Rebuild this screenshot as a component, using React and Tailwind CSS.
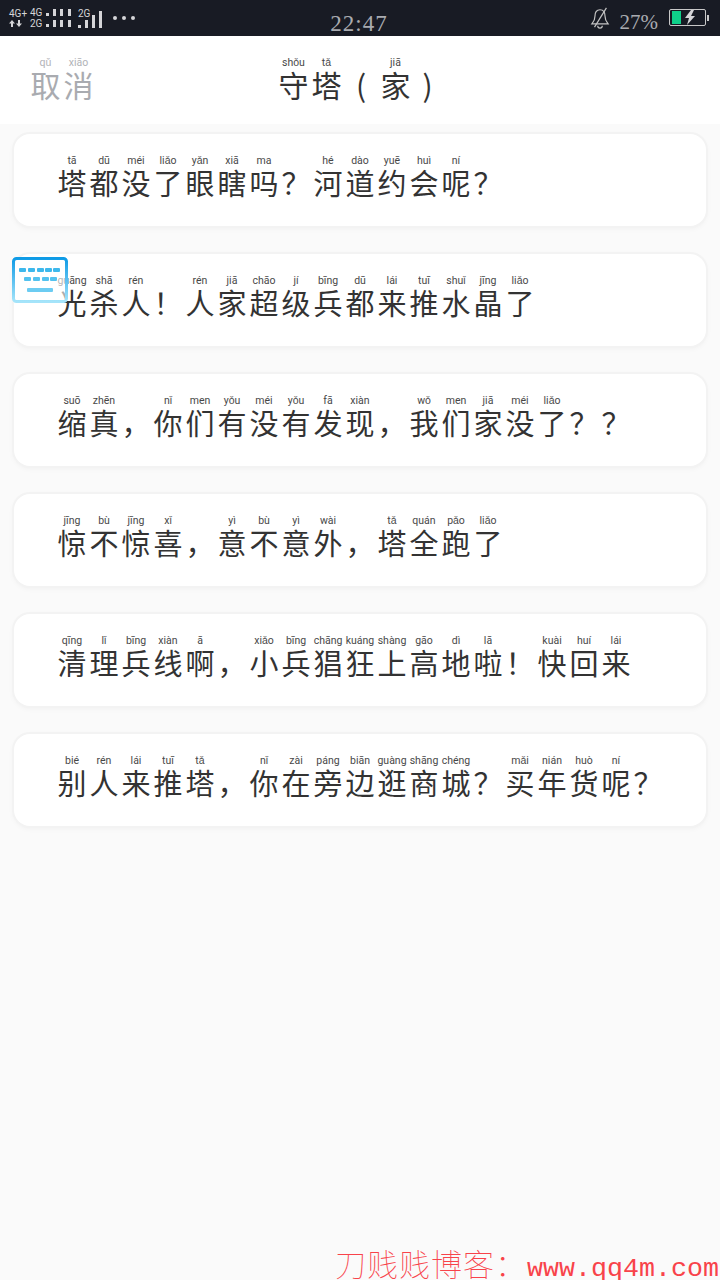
const rows = [
  [['塔','tā'],['都','dū'],['没','méi'],['了','liǎo'],['眼','yǎn'],['瞎','xiā'],['吗','ma'],['？',''],['河','hé'],['道','dào'],['约','yuē'],['会','huì'],['呢','ní'],['？','']],
  [['光','guāng'],['杀','shā'],['人','rén'],['！',''],['人','rén'],['家','jiā'],['超','chāo'],['级','jí'],['兵','bīng'],['都','dū'],['来','lái'],['推','tuī'],['水','shuǐ'],['晶','jīng'],['了','liǎo']],
  [['缩','suō'],['真','zhēn'],['，',''],['你','nǐ'],['们','men'],['有','yǒu'],['没','méi'],['有','yǒu'],['发','fā'],['现','xiàn'],['，',''],['我','wǒ'],['们','men'],['家','jiā'],['没','méi'],['了','liǎo'],['？',''],['？','']],
  [['惊','jīng'],['不','bù'],['惊','jīng'],['喜','xǐ'],['，',''],['意','yì'],['不','bù'],['意','yì'],['外','wài'],['，',''],['塔','tǎ'],['全','quán'],['跑','pǎo'],['了','liǎo']],
  [['清','qīng'],['理','lǐ'],['兵','bīng'],['线','xiàn'],['啊','ā'],['，',''],['小','xiǎo'],['兵','bīng'],['猖','chāng'],['狂','kuáng'],['上','shàng'],['高','gāo'],['地','dì'],['啦','lā'],['！',''],['快','kuài'],['回','huí'],['来','lái']],
  [['别','bié'],['人','rén'],['来','lái'],['推','tuī'],['塔','tǎ'],['，',''],['你','nǐ'],['在','zài'],['旁','páng'],['边','biān'],['逛','guàng'],['商','shāng'],['城','chéng'],['？',''],['买','mǎi'],['年','nián'],['货','huò'],['呢','ní'],['？','']],
];

const cjk = "font-['Noto_Sans_CJK_SC','Noto_Sans',sans-serif]";

function Cell({ han, py, width = 'w-8', size = 'text-[29px]' }) {
  return (
    <div className={`flex flex-col items-center ${width}`}>
      <span className="h-[11px] text-[10.5px] leading-[11px] whitespace-nowrap font-['Roboto',sans-serif] opacity-90">{py}</span>
      <span className={`h-8 leading-8 ${size} ${cjk}`}>{han}</span>
    </div>
  );
}

function Dots() {
  return (
    <div className="flex items-end h-[7px]">
      <div className="w-[3px] h-[3px] bg-[#d5d5d8]" />
      <div className="w-[3px] h-[7px] bg-[#d5d5d8] ml-1" />
      <div className="w-[3px] h-[7px] bg-[#d5d5d8] ml-1" />
      <div className="w-[3px] h-[7px] bg-[#d5d5d8] ml-[5px]" />
    </div>
  );
}

function StatusBar() {
  return (
    <div className="h-9 bg-[#181b24] flex items-center justify-between pl-[9px] pr-[11px] text-[#a9abb0]">
      <div className="w-[200px] flex items-center text-[#d5d5d8] font-['Roboto',sans-serif] text-[10px] leading-[10px]">
        <div className="flex flex-col w-[21px] gap-[1px]">
          <span>4G+</span>
          <svg width="13" height="7" viewBox="0 0 13 7">
            <path d="M3 0 L6 3.5 H4 V7 H2 V3.5 H0 Z M10 7 L13 3.5 H11 V0 H9 V3.5 H7 Z" fill="#d5d5d8" />
          </svg>
        </div>
        <div className="flex flex-col gap-[1px]">
          <div className="flex items-center">
            <span className="w-4">4G</span>
            <Dots />
          </div>
          <div className="flex items-center">
            <span className="w-4">2G</span>
            <Dots />
          </div>
        </div>
        <div className="relative ml-[7px] flex items-end gap-[4px] h-[18px] mt-[1px]">
          <span className="absolute left-0 top-[-1px]">2G</span>
          <div className="w-[3px] h-[3px] bg-[#d5d5d8]" />
          <div className="w-[3px] h-[8px] bg-[#d5d5d8]" />
          <div className="w-[3px] h-[13px] bg-[#d5d5d8]" />
          <div className="w-[3px] h-[17px] bg-[#d5d5d8]" />
        </div>
        <div className="flex gap-[5px] ml-[11px]">
          <div className="w-1 h-1 rounded-full bg-[#d5d5d8]" />
          <div className="w-1 h-1 rounded-full bg-[#d5d5d8]" />
          <div className="w-1 h-1 rounded-full bg-[#d5d5d8]" />
        </div>
      </div>
      <div className="font-['Liberation_Serif',serif] text-[23px] leading-none mt-[11px] tracking-[1px]">22:47</div>
      <div className="w-[200px] flex items-center justify-end">
        <svg width="22" height="22" viewBox="0 0 24 24" fill="none" stroke="#c4c4c4" strokeWidth="1.3" className="mr-[8px] mb-[1px]">
          <path d="M12 3 C8 3 6.5 6 6.5 10 C6.5 15 4 17 3 18.5 H21 C20 17 17.5 15 17.5 10 C17.5 6 16 3 12 3 Z" />
          <path d="M9.5 20.5 A2.5 2.5 0 0 0 14.5 20.5" />
          <path d="M19 1 L6 22" />
        </svg>
        <span className="font-['Liberation_Serif',serif] text-[21px] leading-none mt-[9px] mr-[11px]">27%</span>
        <div className="w-[37px] h-[17px] border border-[#c8c8c8] rounded-[2px] mb-[1px] flex items-center pl-[2px]">
          <div className="w-[9px] h-[13px] bg-[#0fd08a]" />
          <svg width="14" height="15" viewBox="0 0 14 15" className="ml-[2px]">
            <path d="M8 0 L2 8 H6 L4 15 L12 6 H8 L11 0 Z" fill="#d5d5d8" />
          </svg>
        </div>
        <div className="w-[2px] h-[6px] bg-[#c8c8c8] mb-[1px] ml-[1px]" />
      </div>
    </div>
  );
}

function Header() {
  return (
    <div className="h-[88px] bg-white flex items-start pt-[21px] pl-[29px] shrink-0">
      <div className="flex text-[#a9abb0] w-[248px]">
        <Cell han="取" py="qǔ" width="w-[33px]" size="text-[30px]" />
        <Cell han="消" py="xiāo" width="w-[33px]" size="text-[30px]" />
      </div>
      <div className="flex text-[#333]">
        <Cell han="守" py="shǒu" width="w-[33px]" size="text-[30px]" />
        <Cell han="塔" py="tǎ" width="w-[33px]" size="text-[30px]" />
        <Cell han="(" py="" width="w-[36px]" size="text-[30px]" />
        <Cell han="家" py="jiā" width="w-[33px]" size="text-[30px]" />
        <Cell han=")" py="" width="w-[31px]" size="text-[30px]" />
      </div>
    </div>
  );
}

function KeyboardBadge() {
  return (
    <svg width="56" height="46" viewBox="0 0 56 46" className="absolute left-3 top-[257px]">
      <defs>
        <linearGradient id="kb" x1="0" y1="0" x2="0" y2="1">
          <stop offset="0" stopColor="#0f9be6" />
          <stop offset="1" stopColor="#a5e4fa" />
        </linearGradient>
      </defs>
      <rect x="1.5" y="1.5" width="53" height="43" rx="3" fill="#fff" fillOpacity="0.6" stroke="url(#kb)" strokeWidth="3" />
      {[7, 16, 25, 33, 41].map((x) => (
        <rect key={x} x={x} y="11" width="7" height="4" rx="1" fill="#3db8ec" />
      ))}
      {[12, 21, 30, 38].map((x) => (
        <rect key={x} x={x} y="20" width="7" height="4" rx="1" fill="#53c2ef" />
      ))}
      <rect x="15" y="31" width="26" height="4" rx="1" fill="#6cccf2" />
    </svg>
  );
}

export default function App() {
  return (
    <div className="relative w-[720px] h-[1280px] overflow-hidden bg-[#fafafa] flex flex-col">
      <StatusBar />
      <Header />
      <div className="flex flex-col gap-7 px-[14px] pt-[10px]">
        {rows.map((row, i) => (
          <div key={i} className="h-[92px] bg-white rounded-2xl shadow-[0_0_0_2px_#f3f3f3,0_2px_6px_rgba(0,0,0,0.05)] pt-[21px] pl-[42px] flex text-[#333]">
            {row.map(([han, py], j) => (
              <Cell key={j} han={han} py={py} />
            ))}
          </div>
        ))}
      </div>
      <KeyboardBadge />
      <div className="absolute left-[335px] top-[1245px] flex items-baseline text-[#f8434a] whitespace-nowrap">
        <span className={`text-[31px] leading-9 tracking-[1px] font-thin ${cjk}`}>刀贱贱博客：</span>
        <span className="font-['Liberation_Mono',monospace] text-[26.67px] leading-9">www.qq4m.com</span>
      </div>
    </div>
  );
}
